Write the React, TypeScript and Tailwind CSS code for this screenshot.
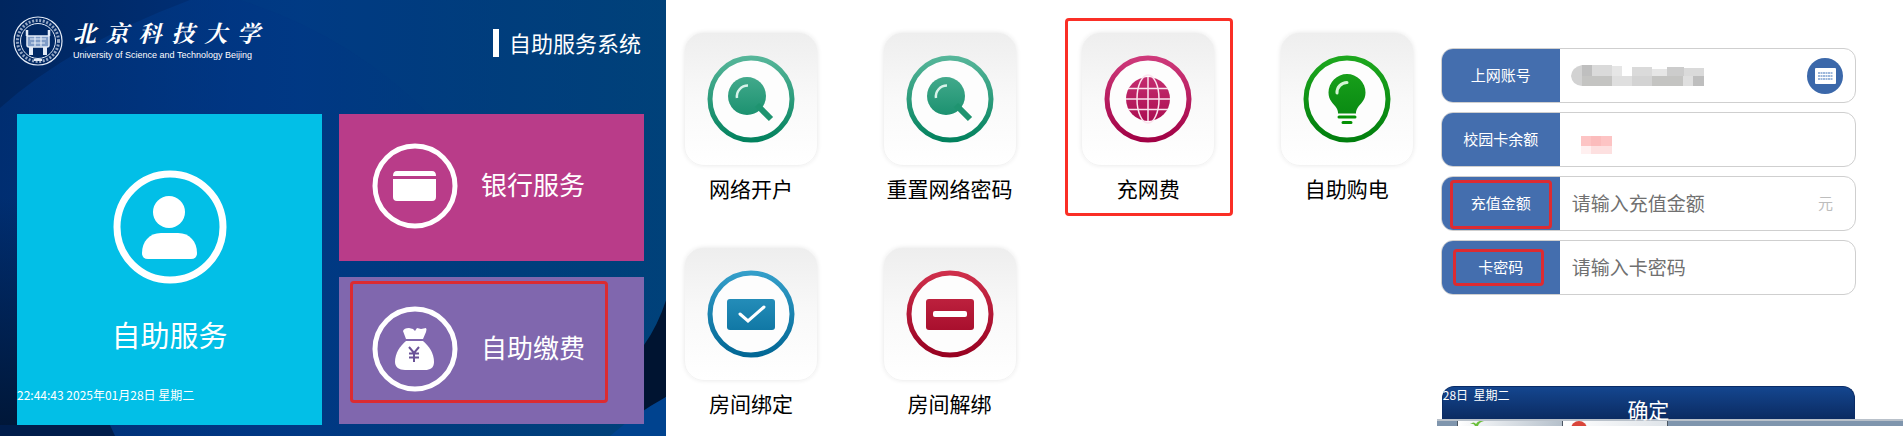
import type { ReactNode } from "react";

interface Service {
  id: string;
  label: string;
  top: string;
  bottom: string;
  glyph: (fill: string) => ReactNode;
  highlighted?: boolean;
}

const searchGlyph = (fill: string) => (
  <>
    <circle cx="40" cy="41" r="19" fill={fill} />
    <path d="M50 50L64 64" stroke="#1f9470" strokeWidth="6" />
    <path d="M30 43A11 11 0 0 1 41 30.500" fill="none" stroke="#d9f2ea" strokeWidth="2.500" />
  </>
);

const services: Service[] = [
  { id: "open", label: "网络开户", top: "#58b79b", bottom: "#00805c", glyph: searchGlyph },
  { id: "reset", label: "重置网络密码", top: "#58b79b", bottom: "#00805c", glyph: searchGlyph },
  {
    id: "network",
    label: "充网费",
    top: "#cf3b7c",
    bottom: "#a00044",
    highlighted: true,
    glyph: (fill) => (
      <>
        <circle cx="44" cy="44" r="22" fill={fill} />
        <g fill="none" stroke="#fbe4ee" strokeWidth="1.500">
          <path d="M44 22V66M22 44H66M24 33.500H64M24 54.500H64" />
          <ellipse cx="44" cy="44" rx="11" ry="24" />
        </g>
      </>
    ),
  },
  {
    id: "power",
    label: "自助购电",
    top: "#1ea81e",
    bottom: "#007d0d",
    glyph: (fill) => (
      <>
        <path d="M44 19a18.500 18.500 0 0 0-18.500 18.500c0 8 5 11 8 15.500 1.500 2.500 1.500 4 1.500 5.500h18c0-1.500 0-3 1.500-5.500 3-4.500 8-7.500 8-15.500A18.500 18.500 0 0 0 44 19z" fill={fill} />
        <path d="M36 62h16M40 67.500h8" stroke="#049104" strokeWidth="3" strokeLinecap="round" />
        <path d="M34 38A10 10 0 0 1 44 27.500" fill="none" stroke="#d5f5d5" strokeWidth="3" strokeLinecap="round" />
      </>
    ),
  },
  {
    id: "bind",
    label: "房间绑定",
    top: "#35a0cb",
    bottom: "#006593",
    glyph: (fill) => (
      <>
        <rect x="20" y="29" width="48" height="31" rx="3" fill={fill} />
        <path d="M33 44l8 7 16-14" fill="none" stroke="#fff" strokeWidth="3" strokeLinecap="round" />
      </>
    ),
  },
  {
    id: "unbind",
    label: "房间解绑",
    top: "#d0304c",
    bottom: "#960020",
    glyph: (fill) => (
      <>
        <rect x="20" y="29" width="48" height="31" rx="3" fill={fill} />
        <rect x="27" y="41" width="34" height="6" rx="2" fill="#fff" />
      </>
    ),
  },
];

function Seal() {
  return (
    <svg viewBox="0 0 50 50" className="size-[50px] shrink-0" fill="none" stroke="#e3ebf7" aria-hidden="true">
      <circle cx="25" cy="25" r="24" strokeWidth="1.200" />
      <circle cx="25" cy="25" r="20.500" strokeWidth="3" strokeDasharray="2 1.600" opacity=".65" />
      <circle cx="25" cy="25" r="17.500" strokeWidth="1" />
      <path d="M14 20h22v9q0 2-2 2H16q-2 0-2-2z" fill="#7f9cc7" strokeWidth="1.500" />
      <path d="M14 20v-6M36 20v-6" strokeWidth="2.500" />
      <path d="M17 23h16M18 27h14M22 20v10M28 20v10" strokeWidth="1.200" />
      <path d="M18 31v8M32 31v8" strokeWidth="4" />
      <path d="M21 44h8" strokeWidth="2" />
    </svg>
  );
}

function Backdrop() {
  return (
    <svg viewBox="0 0 666 436" preserveAspectRatio="none" className="absolute inset-0 size-full" aria-hidden="true">
      <defs>
        <linearGradient id="sky" x1="0" y1="0" x2="1" y2="0">
          <stop offset="0" stopColor="#00265f" />
          <stop offset=".35" stopColor="#003078" />
          <stop offset="1" stopColor="#003f78" />
        </linearGradient>
        <linearGradient id="night" x1="0" y1="0" x2="0" y2="1">
          <stop offset=".45" stopColor="#001636" stopOpacity="0" />
          <stop offset="1" stopColor="#001636" />
        </linearGradient>
        <linearGradient id="swoosh" x1="0" y1="0" x2="1" y2="0">
          <stop offset="0" stopColor="#003684" stopOpacity=".5" />
          <stop offset=".45" stopColor="#003c8c" stopOpacity=".6" />
          <stop offset="1" stopColor="#00467c" stopOpacity=".2" />
        </linearGradient>
      </defs>
      <path d="M0 0H666V436H0z" fill="url(#sky)" />
      <path d="M0 108Q70 45 190 0H666V436H0z" fill="url(#swoosh)" />
      <path d="M240 0Q350 35 430 115V436H666V0z" fill="#004c80" opacity=".12" />
      <path d="M0 0H17V436H0z" fill="url(#night)" />
      <path d="M0 425H110L115 436H0z" fill="#001d4b" />
      <path d="M666 300Q658 325 644 345V414L666 397z" fill="#001431" />
      <path d="M666 397Q635 414 610 436H666z" fill="#00438f" />
    </svg>
  );
}

function RedFrame({ className }: { className: string }) {
  return <span className={`pointer-events-none absolute rounded-sm border-3 border-[#dc2b31] ${className}`} />;
}

function KioskHome() {
  return (
    <section className="relative w-[35%] pt-4 pr-[22px] pl-[17px] text-white">
      <Backdrop />
      <header className="relative flex h-[58px] items-start justify-between pr-[3px]">
        <div className="-ml-1 flex items-center gap-2.5">
          <Seal />
          <div className="flex w-[187px] flex-col">
            <h1 className="flex justify-between font-['Noto_Serif_CJK_SC','Noto_Sans_CJK_SC',serif] text-[23px] leading-8 font-bold italic">
              {"北京科技大学".split("").map((char) => (
                <span key={char}>{char}</span>
              ))}
            </h1>
            <p className="pb-1 font-['Liberation_Sans',sans-serif] text-[9px] leading-3 whitespace-nowrap">
              University of Science and Technology Beijing
            </p>
          </div>
        </div>
        <div className="flex items-center gap-2.5 pt-3">
          <span className="h-7 w-1.5 bg-white" />
          <h2 className="pb-0.5 text-[22px] leading-7">自助服务系统</h2>
        </div>
      </header>

      <main className="relative mt-10 grid grid-cols-2 gap-x-[17px]">
        <button className="relative flex h-[311px] flex-col items-center bg-[#02bfe7] pt-14">
          <svg viewBox="0 0 114 114" className="size-[114px]" fill="#fff" aria-hidden="true">
            <circle cx="57" cy="57" r="53" fill="none" stroke="#fff" strokeWidth="7" />
            <circle cx="56" cy="42" r="16" />
            <path d="M48 63h17c12 0 19 9 19 20q0 6-6 6H35q-6 0-6-6c0-11 7-20 19-20z" />
          </svg>
          <span className="mt-[30px] text-[29px] leading-10">自助服务</span>
          <time className="absolute bottom-[22px] left-0 text-[12px] leading-4 whitespace-pre">
            22:44:43 2025年01月28日 星期二
          </time>
        </button>
        <div className="flex flex-col gap-4">
          <button className="flex h-[147px] items-center gap-[23px] bg-[#b93c89] pb-1 pl-[33px]">
            <svg viewBox="0 0 86 86" className="size-[86px]" fill="#fff" aria-hidden="true">
              <circle cx="43" cy="43" r="40" fill="none" stroke="#fff" strokeWidth="5" />
              <path d="M21 33q0-5 4-5h35q4 0 4 5zM21 36h43v18q0 4-4 4H25q-4 0-4-4z" />
            </svg>
            <span className="pb-1 text-[26px] leading-9">银行服务</span>
          </button>
          <button className="relative flex h-[147px] items-center gap-[23px] bg-[#8067ae] pb-1 pl-[33px]">
            <svg viewBox="0 0 86 86" className="size-[86px]" fill="#fff" aria-hidden="true">
              <circle cx="43" cy="43" r="40" fill="none" stroke="#fff" strokeWidth="5" />
              <path d="M34 33l-3-8q1-3 6-3l4 1 2 2 2-3 4 1 5-1q1 1 0 4l-3 7z" />
              <path d="M34 35h17c6 5 11 12 11 21 0 6-4 8-9 8H33c-6 0-10-3-10-8 0-9 5-16 11-21z" />
              <path d="M37 41l5 6 5-6M42 47v9M37 47.500h10M37 51.500h10" fill="none" stroke="#6a5298" strokeWidth="2" />
            </svg>
            <span className="pb-1 text-[26px] leading-9">自助缴费</span>
            <RedFrame className="top-1 left-[11px] h-[122px] w-[258px]" />
          </button>
        </div>
      </main>
    </section>
  );
}

function ServiceCard({ service }: { service: Service }) {
  const gradientId = `tone-${service.id}`;
  const fill = `url(#${gradientId})`;

  return (
    <button className="relative flex flex-col items-center text-black">
      <span className="flex size-[134px] items-center justify-center rounded-[20px] border border-[#f3f3f3] bg-linear-to-b from-[#eeeeee] via-[#f9f9f9] to-white shadow-[0_0_4px_#ececec]">
        <svg viewBox="0 0 88 88" className="size-[88px]" aria-hidden="true">
          <defs>
            <linearGradient id={gradientId} gradientUnits="userSpaceOnUse" x1="0" y1="0" x2="0" y2="88">
              <stop offset="0" stopColor={service.top} />
              <stop offset="1" stopColor={service.bottom} />
            </linearGradient>
          </defs>
          <circle cx="44" cy="44" r="41" fill="#fdfdfd" stroke={fill} strokeWidth="5" />
          {service.glyph(fill)}
        </svg>
      </span>
      <span className="mt-[7px] text-[21px] leading-[30px] whitespace-nowrap">{service.label}</span>
      {service.highlighted && (
        <span className="pointer-events-none absolute -top-3.5 -left-4 h-[198px] w-[168px] rounded-sm border-3 border-[#fa2f26]" />
      )}
    </button>
  );
}

function ServiceMenu() {
  return (
    <section className="flex-1 pt-8 pl-[18px]">
      <div className="grid grid-cols-[repeat(4,134px)] justify-between gap-y-11 pr-[23px]">
        {services.map((service) => (
          <ServiceCard key={service.id} service={service} />
        ))}
      </div>
    </section>
  );
}

interface FieldProps {
  id: string;
  label: string;
  frame?: string;
  placeholder?: string;
  readOnly?: boolean;
  children?: ReactNode;
}

function Field({ id, label, frame, placeholder, readOnly, children }: FieldProps) {
  return (
    <div className="relative flex h-[55px] overflow-hidden rounded-xl border border-[#cfcfcf] bg-white">
      <label htmlFor={id} className="flex w-[118px] shrink-0 items-center justify-center bg-[#446eae] text-[15px] text-white">
        {label}
      </label>
      <input
        id={id}
        type="text"
        readOnly={readOnly}
        placeholder={placeholder}
        className="min-w-0 flex-1 px-3 text-[19px] text-[#555] outline-none placeholder:text-[#707070]"
      />
      {children}
      {frame && <RedFrame className={frame} />}
    </div>
  );
}

function AccountMask() {
  return (
    <svg viewBox="0 0 136 22" className="absolute top-4 left-[129px] h-[22px] w-[136px]" aria-hidden="true">
      <path d="M11 0v21Q1 20 0 11Q1 2 11 0z" fill="#d2d2d2" />
      <path d="M11 0h10v11H11z" fill="#bfbfbf" />
      <path d="M21 0h20v11H21zM61 2h20v9H61zM113 3h20v8h-20z" fill="#dadada" />
      <path d="M41 1h10v10H41zM81 4h15v7H81z" fill="#e6e6e6" />
      <path d="M96 2h17v9H96z" fill="#cccccc" />
      <path d="M11 11h30v10H11zM81 11h31v10H81z" fill="#c4c4c2" />
      <path d="M41 11h20v10H41zM112 11h10v10h-10z" fill="#dfdfdf" />
      <path d="M61 11h20v10H61z" fill="#d3d3d3" />
      <path d="M122 11h11v10h-11z" fill="#bebebe" />
    </svg>
  );
}

function RechargeForm() {
  return (
    <section className="flex w-[24.5%] flex-col pt-12">
      <form className="flex flex-col gap-[9px] pr-[47px] pl-1">
        <Field id="account" label="上网账号" readOnly>
          <AccountMask />
          <button type="button" aria-label="键盘" className="mr-3 flex items-center">
            <svg viewBox="0 0 36 36" className="size-9">
              <circle cx="18" cy="18" r="18" fill="#3b68aa" />
              <rect x="8" y="10" width="21" height="16" rx="1" fill="#fff" />
              <path d="M11 15h15M11 18h15M11 21h15" stroke="#7ea0d0" strokeWidth="1.500" strokeDasharray="2 .5" />
            </svg>
          </button>
        </Field>
        <Field id="balance" label="校园卡余额" readOnly>
          <svg viewBox="0 0 31 18" className="absolute top-[23px] left-[139px] h-[18px] w-[31px]" aria-hidden="true">
            <path d="M0 0h31v10H0z" fill="#fdc4c4" />
            <path d="M10 0h10v10H10z" fill="#fbbcbc" />
            <path d="M0 10h31v8H0z" fill="#fde0e0" />
            <path d="M0 10h10v8H0z" fill="#fff0f0" />
          </svg>
        </Field>
        <Field id="amount" label="充值金额" placeholder="请输入充值金额" frame="top-[3px] left-2 h-[49px] w-[102px]">
          <span className="mr-[22px] flex items-center text-[15px] text-[#bdbdbd]">元</span>
        </Field>
        <Field id="password" label="卡密码" placeholder="请输入卡密码" frame="top-2 left-[11px] h-[37px] w-[91px]" />
      </form>

      <div className="mt-[91px] pr-12 pl-[5px]">
        <button
          type="button"
          className="relative flex h-[33px] w-full items-end justify-center rounded-t-xl border border-b-0 border-[#0a2c66] bg-linear-to-b from-[#14468f] to-[#0b2b62] text-[21px] leading-5 text-white"
        >
          确定
          <span className="absolute top-0 left-0 text-[12px] leading-4 whitespace-pre">28日  星期二</span>
        </button>
      </div>
      <div className="flex h-[7px] overflow-hidden border-t-2 border-[#b9c1ca] bg-[#7f95ad]">
        <span className="ml-5 flex w-[105px] justify-start border-l border-[#4b5663] bg-linear-to-r from-white to-[#b5c0cb] pl-3">
          <svg viewBox="0 0 14 5" className="h-[5px] w-3.5" aria-hidden="true">
            <path d="M0 3q4-3 6 0 2-4 8-3-5 1-6 5H5q-1-3-5-2z" fill="#6abf3a" />
          </svg>
        </span>
        <span className="flex w-[106px] justify-start border-x border-[#4b5663] bg-linear-to-r from-white to-[#dfe4e9] pl-2">
          <svg viewBox="0 0 16 5" className="h-[5px] w-4" aria-hidden="true">
            <circle cx="8" cy="8" r="8" fill="#d9463b" />
          </svg>
        </span>
      </div>
    </section>
  );
}

export default function App() {
  return (
    <div className="flex min-h-screen bg-white font-['Noto_Sans_CJK_SC',sans-serif]">
      <KioskHome />
      <ServiceMenu />
      <RechargeForm />
    </div>
  );
}
